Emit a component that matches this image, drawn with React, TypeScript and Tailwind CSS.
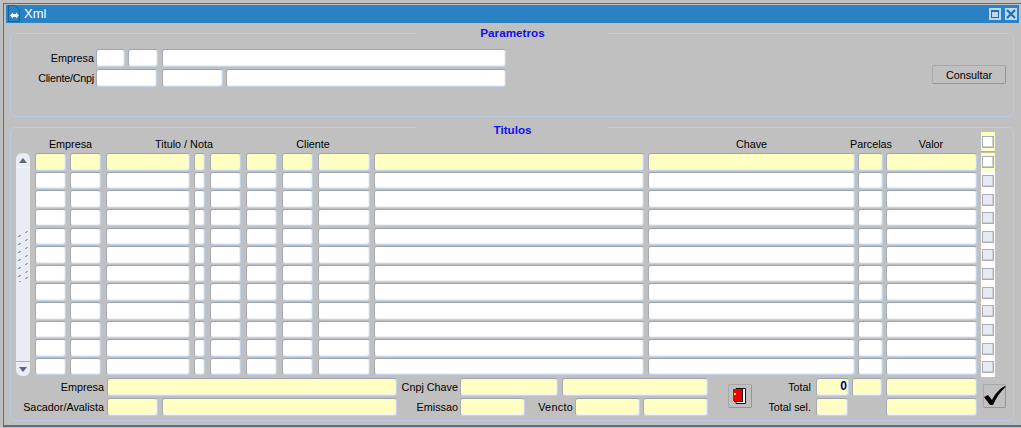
const rowCols = [
  "ml-0 w-[31px]",
  "ml-[4px] w-[31px]",
  "ml-[5px] w-[84px]",
  "ml-[4px] w-[11px]",
  "ml-[5px] w-[31px]",
  "ml-[5px] w-[31px]",
  "ml-[5px] w-[31px]",
  "ml-[5px] w-[52px]",
  "ml-[4px] w-[270px]",
  "ml-[4px] w-[207px]",
  "ml-[3px] w-[25px]",
  "ml-[3px] w-[91px]",
];

function Field({ className, yellow, children }: { className: string; yellow?: boolean; children?: React.ReactNode }) {
  return (
    <div
      className={`shrink-0 rounded-[3px] border border-t-[#9fa4ac] border-l-[#a6acb5] border-r-[#c3d3e8] border-b-[#c3d3e8] shadow-[inset_-1px_-1px_0_#eef3fa] ${
        yellow ? "bg-[#ffffc3]" : "bg-white"
      } ${className}`}
    >
      {children}
    </div>
  );
}

function Label({ className, children }: { className: string; children: React.ReactNode }) {
  return <div className={`shrink-0 whitespace-nowrap text-right leading-[18px] ${className}`}>{children}</div>;
}

function Panel({
  legend,
  legendClass,
  className,
  children,
}: {
  legend: string;
  legendClass: string;
  className: string;
  children: React.ReactNode;
}) {
  return (
    <div className={`relative ml-[6px] w-[1004px] shrink-0 rounded-[5px] border border-[#b9cde6] ${className}`}>
      <div
        className={`absolute left-[406px] w-[191px] bg-[#c0c0c0] text-center text-[11.7px] font-bold leading-[14px] text-[#1010f0] ${legendClass}`}
      >
        {legend}
      </div>
      {children}
    </div>
  );
}

function HeaderCell({ className, children }: { className: string; children?: React.ReactNode }) {
  return <div className={`flex shrink-0 justify-center whitespace-nowrap pt-[10px] leading-[12px] ${className}`}>{children}</div>;
}

function Checkbox({ dim }: { dim?: boolean }) {
  return (
    <div
      className={`h-[12px] w-[12px] border border-[#a9aeb6] shadow-[inset_-1px_-1px_0_#c8cfd9] ${
        dim ? "bg-[#e6ebf3]" : "bg-white"
      }`}
    />
  );
}

function Scrollbar() {
  return (
    <div className="flex h-[223px] w-[14px] shrink-0 flex-col items-center justify-between rounded-[6px] bg-[#e8edf5]">
      <div className="flex h-[15px] w-full items-center justify-center rounded-t-[6px] border-b border-[#f6f8fb]">
        <svg width="8" height="5" viewBox="0 0 8 5"><path d="M4 0 L8 5 L0 5 Z" fill="#5c6878" /></svg>
      </div>
      <svg width="10" height="52" viewBox="0 0 10 52" className="mb-[18px]">
        {[0, 8, 16, 24, 32, 40, 46].map((y) => (
          <g key={y} fill="#9aa3b0">
            <rect x="1" y={y + 5} width="2" height="1" />
            <rect x="0" y={y + 6} width="2" height="1" />
            <rect x="8" y={y + 1} width="2" height="1" />
            <rect x="7" y={y + 2} width="2" height="1" />
          </g>
        ))}
      </svg>
      <div className="flex h-[15px] w-full items-center justify-center rounded-b-[6px] border-t border-[#9fb0c4]">
        <svg width="8" height="5" viewBox="0 0 8 5"><path d="M0 0 L8 0 L4 5 Z" fill="#5c6878" /></svg>
      </div>
    </div>
  );
}

function GridRow({ index }: { index: number }) {
  const yellow = index === 0;
  return (
    <div className="flex h-[18.64px] items-start">
      {rowCols.map((c) => (
        <Field key={c} yellow={yellow} className={`h-[17.6px] ${c}`} />
      ))}
      <div className={`ml-[4px] flex w-[14px] shrink-0 items-center self-stretch pl-[1px] ${yellow ? "bg-[#ffffc3]" : "bg-white"}`}>
        <Checkbox dim={!yellow} />
      </div>
    </div>
  );
}

function ToolButton({ className, children }: { className: string; children: React.ReactNode }) {
  return (
    <div
      className={`flex h-[24px] shrink-0 items-center justify-center rounded-[2px] border border-t-[#a5a8ad] border-l-[#a5a8ad] border-r-[#8398b2] border-b-[#8398b2] ${className}`}
    >
      {children}
    </div>
  );
}

export default function App() {
  return (
    <div
      className="h-[428px] w-[1021px] overflow-hidden bg-[#c0c0c0] pt-[3px] text-[10.8px] text-black"
      style={{ fontFamily: '"Liberation Sans", Arial, sans-serif' }}
    >
      <div className="ml-[3px] h-[424px] border-b-2 border-l border-t border-[#5a6d88]">
        <div className="ml-[2px] mr-[2px] mt-[1px] flex h-[18px] items-center bg-[#2a82c5]">
          <svg width="12" height="17" viewBox="0 0 12 17" className="ml-[2px] mt-[-1px] shrink-0">
            <path d="M0.5 0.5 H7 L11.5 5 V16.5 H0.5 Z" fill="#2a82c5" stroke="#16619e" />
            <path d="M2 10.5 L5 7.5 V13.5 Z M11 10.5 L8 7.5 V13.5 Z" fill="#fff" />
            <rect x="5" y="9" width="3" height="3" fill="#fff" />
          </svg>
          <span className="ml-[4px] text-[13px] leading-[18px] text-white">Xml</span>
          <div className="ml-auto mr-[2px] flex items-center gap-[4px]">
            <div className="flex h-[12px] w-[12px] items-center justify-center bg-[#bcd7ee]">
              <div className="h-[8px] w-[8px] border border-t-2 border-[#1f6fae]" />
            </div>
            <div className="flex h-[12px] w-[12px] items-center justify-center bg-[#bcd7ee]">
              <svg width="10" height="10" viewBox="0 0 10 10">
                <path d="M1 1 L9 9 M9 1 L1 9" stroke="#1f6fae" strokeWidth="2.2" />
              </svg>
            </div>
          </div>
        </div>

        <Panel legend="Parametros" legendClass="top-[-8px]" className="mt-[10px] h-[84px]">
          <div className="flex items-start">
            <div className="flex flex-col gap-[2px] pt-[15px]">
              <div className="flex">
                <Label className="w-[83px]">Empresa</Label>
                <Field className="ml-[2px] h-[18px] w-[29px]" />
                <Field className="ml-[3px] h-[18px] w-[30px]" />
                <Field className="ml-[4px] h-[18px] w-[344px]" />
              </div>
              <div className="flex">
                <Label className="w-[83px] tracking-[-0.25px]">Cliente/Cnpj</Label>
                <Field className="ml-[2px] h-[18px] w-[61px]" />
                <Field className="ml-[5px] h-[18px] w-[61px]" />
                <Field className="ml-[3px] h-[18px] w-[280px]" />
              </div>
            </div>
            <button className="ml-auto mr-[7px] mt-[31px] h-[19px] w-[74px] rounded-[2px] border border-t-[#a5a8ad] border-l-[#a5a8ad] border-r-[#8398b2] border-b-[#8398b2] text-[10.8px] leading-[16px]">
              Consultar
            </button>
          </div>
        </Panel>

        <Panel legend="Titulos" legendClass="top-[-5px]" className="mt-[10px] h-[294px]">
          <div className="flex">
            <div className="ml-[5px] mt-[25px]">
              <Scrollbar />
            </div>
            <div className="ml-[5px]">
              <div className="flex h-[25px] items-start">
                <HeaderCell className="w-[71px]">Empresa</HeaderCell>
                <HeaderCell className="w-[156px]">Titulo / Nota</HeaderCell>
                <HeaderCell className="w-[102px]">Cliente</HeaderCell>
                <HeaderCell className="w-[284px]" />
                <HeaderCell className="w-[207px]">Chave</HeaderCell>
                <HeaderCell className="w-[32px]">Parcelas</HeaderCell>
                <HeaderCell className="w-[88px]">Valor</HeaderCell>
                <div className="ml-[6px] mt-[4px] flex h-[20px] w-[14px] shrink-0 items-center border-b border-[#a9aeb6] bg-[#ffffc3] pl-[1px]">
                  <Checkbox />
                </div>
              </div>
              {Array.from({ length: 12 }, (_, i) => (
                <GridRow key={i} index={i} />
              ))}
            </div>
          </div>

          <div className="mt-[1px] flex items-start">
            <div className="flex flex-col gap-[2px]">
              <div className="flex">
                <Label className="w-[93px]">Empresa</Label>
                <Field yellow className="ml-[3px] h-[18px] w-[290px]" />
                <Label className="w-[61px]">Cnpj Chave</Label>
                <Field yellow className="ml-[2px] h-[18px] w-[98px]" />
                <Field yellow className="ml-[4px] h-[18px] w-[146px]" />
              </div>
              <div className="flex">
                <Label className="w-[93px]">Sacador/Avalista</Label>
                <Field yellow className="ml-[3px] h-[18px] w-[51px]" />
                <Field yellow className="ml-[4px] h-[18px] w-[235px]" />
                <Label className="w-[61px]">Emissao</Label>
                <Field yellow className="ml-[2px] h-[18px] w-[65px]" />
                <Label className="w-[48px] tracking-[0.3px]">Vencto</Label>
                <Field yellow className="ml-[2px] h-[18px] w-[65px]" />
                <Field yellow className="ml-[3px] h-[18px] w-[65px]" />
              </div>
            </div>

            <ToolButton className="ml-[20px] mt-[6px] w-[24px]">
              <svg width="14" height="16" viewBox="0 0 14 16">
                <path d="M3 0.5 H12.5 V15.5 H3 Z" fill="#fff" stroke="#111" />
                <path d="M0 1 H9 V13 H0 Z" fill="#f00000" />
                <path d="M9 1 H10 V14 H1 V13 H9 Z" fill="#111" />
                <rect x="1" y="5" width="2" height="2" fill="#ffff00" />
              </svg>
            </ToolButton>

            <div className="flex flex-col gap-[2px]">
              <div className="flex">
                <Label className="w-[59px]">Total</Label>
                <Field yellow className="ml-[5px] h-[18px] w-[33px] pr-[1px] text-right text-[12px] font-bold leading-[15px] text-[#000080]">
                  0
                </Field>
                <Field yellow className="ml-[3px] h-[18px] w-[30px]" />
                <Field yellow className="ml-[4px] h-[18px] w-[91px]" />
              </div>
              <div className="flex">
                <Label className="w-[59px]">Total sel.</Label>
                <Field yellow className="ml-[5px] h-[18px] w-[32px]" />
                <Field yellow className="ml-[38px] h-[18px] w-[91px]" />
              </div>
            </div>

            <ToolButton className="ml-[6px] mt-[6px] w-[23px]">
              <svg width="22" height="20" viewBox="0 0 22 20" className="shrink-0">
                <path d="M0 11 L4 9 L8 14 C11 8 15 3 21 0 L21.5 1 C16 6 12 12 9 19 L6 19 Z" fill="#000" />
              </svg>
            </ToolButton>
          </div>
        </Panel>
      </div>
    </div>
  );
}
